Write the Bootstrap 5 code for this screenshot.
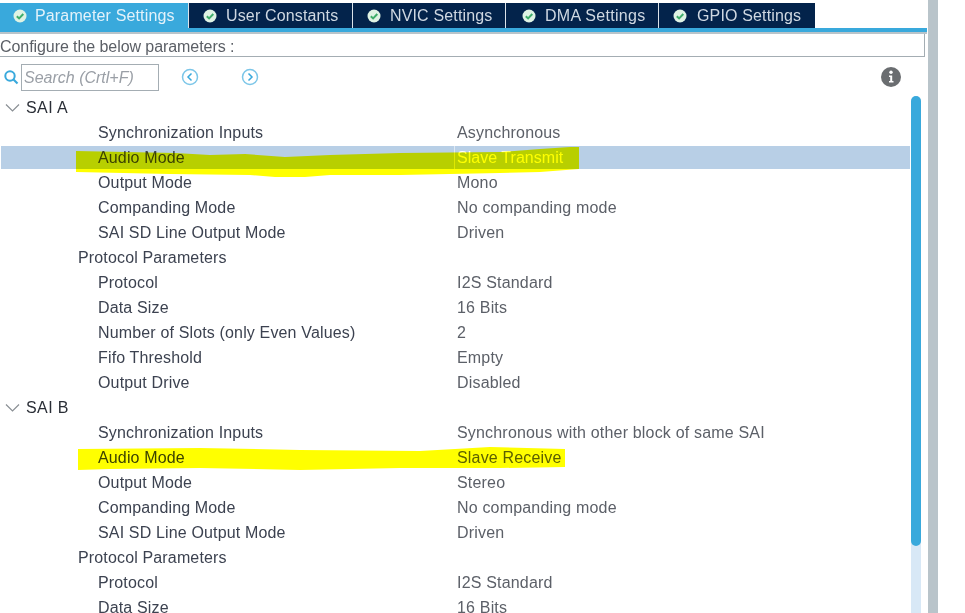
<!DOCTYPE html>
<html lang="en"><head><meta charset="utf-8"><title>Parameter Settings</title>
<link href="https://cdn.jsdelivr.net/npm/bootstrap@5.3.0/dist/css/bootstrap.min.css" rel="stylesheet">
<style>
html,body{height:613px;overflow:hidden;background:#fff}
body{font-family:"Liberation Sans",Arial,sans-serif;font-size:16px;color:#3c4250;position:relative}
.shell{width:965px;height:613px;overflow:hidden}
.leftcol{width:927px;height:613px;flex:none;padding-top:3px}
.sepa{width:10px;height:613px;flex:none;background:#b9c4ca;margin-left:1px}
.tabbar{height:25px}
.tabx{height:25px;background:#03234b;color:#cfd8e2;display:flex;align-items:center;gap:8px;padding-left:14px;border-right:1px solid #dbe3ea;letter-spacing:.15px;font-size:16px;white-space:nowrap}
.tabx.on{background:#39a9dc;color:#e3f2fa;padding-left:13px}
.tabx svg{flex:none}
.w1{width:189px}.w2{width:164px;gap:9px}.w3{width:153px;gap:9px}.w4{width:153px;padding-left:16px;gap:9px;letter-spacing:.3px}.w5{width:156px;border-right:0;gap:10px}
.blueln{height:4px;background:#39a9dc;}
.grayln{height:2px;background:#b9c4ca;width:927px}
.confbox{height:23px;width:925px;border:1px solid #a4adb3;border-top:0;border-left:0;line-height:20px;padding-top:3px;color:#5b5f66;letter-spacing:-.07px}
.searchrow{height:38px;padding-left:3px;padding-top:2px;position:relative}
.sbox{width:138px;height:27px;border:1px solid #a4adb3;color:#9a9fa6;font-style:italic;line-height:25px;padding-left:2px;margin-left:2px}
.nav1{margin-left:22px}.nav2{margin-left:42px}
.infoi{margin-left:auto;margin-right:26px}
.listwrap{height:518px;overflow:hidden;position:relative}
.scrl{width:10px;background:#d8e8f6;position:absolute;right:6px;top:1px;bottom:0;border-radius:5px 5px 0 0}
.scrl i{display:block;height:450px;background:#39a9dc;border-radius:5px}
.rowx{height:25px;line-height:25px;display:flex;white-space:nowrap;letter-spacing:.15px;width:910px}
.rowx.sel{background:#b8cfe6;height:23px;line-height:23px;margin:1px 0;border-left:1px solid #fff}
.rowx.sel .ind2{padding-left:97px;width:453px}
.rowx.sel .val{border-left:1px solid #dfe9f3;padding-left:2px;letter-spacing:.03px}
.ind1{padding-left:78px;width:457px;flex:none}
.ind2{padding-left:98px;width:457px;flex:none}
.val{color:#5c6068;letter-spacing:.18px}
.head{padding-left:5px;color:#2a2e36;align-items:center;gap:5px;letter-spacing:.4px}
.hl{position:absolute;left:0;top:0;pointer-events:none;mix-blend-mode:multiply}
</style></head>
<body>
<div class="shell d-flex">
<div class="leftcol">
 <div class="tabbar d-flex">
  <div class="tabx on w1"><svg width="14" height="14" viewBox="0 0 14 14"><circle cx="7" cy="7" r="6.500" fill="#dff3e4"/><path d="M3.800 7.200l2.300 2.200 4.200-4.400" fill="none" stroke="#3fae6a" stroke-width="2"/></svg>Parameter Settings</div>
  <div class="tabx w2"><svg width="14" height="14" viewBox="0 0 14 14"><circle cx="7" cy="7" r="6.500" fill="#dff3e4"/><path d="M3.800 7.200l2.300 2.200 4.200-4.400" fill="none" stroke="#3fae6a" stroke-width="2"/></svg>User Constants</div>
  <div class="tabx w3"><svg width="14" height="14" viewBox="0 0 14 14"><circle cx="7" cy="7" r="6.500" fill="#dff3e4"/><path d="M3.800 7.200l2.300 2.200 4.200-4.400" fill="none" stroke="#3fae6a" stroke-width="2"/></svg>NVIC Settings</div>
  <div class="tabx w4"><svg width="14" height="14" viewBox="0 0 14 14"><circle cx="7" cy="7" r="6.500" fill="#dff3e4"/><path d="M3.800 7.200l2.300 2.200 4.200-4.400" fill="none" stroke="#3fae6a" stroke-width="2"/></svg>DMA Settings</div>
  <div class="tabx w5"><svg width="14" height="14" viewBox="0 0 14 14"><circle cx="7" cy="7" r="6.500" fill="#dff3e4"/><path d="M3.800 7.200l2.300 2.200 4.200-4.400" fill="none" stroke="#3fae6a" stroke-width="2"/></svg>GPIO Settings</div>
 </div>
 <div class="blueln"></div>
 <div class="grayln"></div>
 <div class="confbox">Configure the below parameters :</div>
 <div class="searchrow d-flex align-items-center">
  <svg width="16" height="16" viewBox="0 0 16 16"><circle cx="7" cy="7" r="4.700" fill="none" stroke="#39a9dc" stroke-width="2"/><path d="M10.500 10.500l4 4" stroke="#39a9dc" stroke-width="2.200"/></svg>
  <div class="sbox">Search (Crtl+F)</div>
  <svg class="nav1" width="18" height="18" viewBox="0 0 18 18"><circle cx="9" cy="9" r="7.500" fill="none" stroke="#7cc6e8" stroke-width="1.500"/><path d="M10.500 5.500L7 9l3.500 3.500" fill="none" stroke="#39a9dc" stroke-width="1.500"/></svg>
  <svg class="nav2" width="18" height="18" viewBox="0 0 18 18"><circle cx="9" cy="9" r="7.500" fill="none" stroke="#7cc6e8" stroke-width="1.500"/><path d="M7.500 5.500L11 9l-3.500 3.500" fill="none" stroke="#39a9dc" stroke-width="1.500"/></svg>
  <svg class="infoi" width="20" height="20" viewBox="0 0 20 20"><circle cx="10" cy="10" r="10" fill="#6a6d70"/><circle cx="10" cy="5.200" r="1.700" fill="#fff"/><path d="M8 8.500h3.200V14H12.500v1.500H8V14h1.200V10H8z" fill="#fff"/></svg>
 </div>
 <div class="listwrap">
  <div class="rowx head"><svg width="16" height="10" viewBox="0 0 16 10"><path d="M1 1.500l6.500 6.500L14 1.500" fill="none" stroke="#8a8f94" stroke-width="1.200"/></svg>SAI A</div>
  <div class="rowx"><div class="ind2">Synchronization Inputs</div><div class="val">Asynchronous</div></div>
  <div class="rowx sel"><div class="ind2">Audio Mode</div><div class="val text-white">Slave Transmit</div></div>
  <div class="rowx"><div class="ind2">Output Mode</div><div class="val">Mono</div></div>
  <div class="rowx"><div class="ind2">Companding Mode</div><div class="val">No companding mode</div></div>
  <div class="rowx"><div class="ind2">SAI SD Line Output Mode</div><div class="val">Driven</div></div>
  <div class="rowx"><div class="ind1">Protocol Parameters</div></div>
  <div class="rowx"><div class="ind2">Protocol</div><div class="val">I2S Standard</div></div>
  <div class="rowx"><div class="ind2">Data Size</div><div class="val">16 Bits</div></div>
  <div class="rowx"><div class="ind2">Number of Slots (only Even Values)</div><div class="val">2</div></div>
  <div class="rowx"><div class="ind2">Fifo Threshold</div><div class="val">Empty</div></div>
  <div class="rowx"><div class="ind2">Output Drive</div><div class="val">Disabled</div></div>
  <div class="rowx head"><svg width="16" height="10" viewBox="0 0 16 10"><path d="M1 1.500l6.500 6.500L14 1.500" fill="none" stroke="#8a8f94" stroke-width="1.200"/></svg>SAI B</div>
  <div class="rowx"><div class="ind2">Synchronization Inputs</div><div class="val">Synchronous with other block of same SAI</div></div>
  <div class="rowx"><div class="ind2">Audio Mode</div><div class="val">Slave Receive</div></div>
  <div class="rowx"><div class="ind2">Output Mode</div><div class="val">Stereo</div></div>
  <div class="rowx"><div class="ind2">Companding Mode</div><div class="val">No companding mode</div></div>
  <div class="rowx"><div class="ind2">SAI SD Line Output Mode</div><div class="val">Driven</div></div>
  <div class="rowx"><div class="ind1">Protocol Parameters</div></div>
  <div class="rowx"><div class="ind2">Protocol</div><div class="val">I2S Standard</div></div>
  <div class="rowx"><div class="ind2">Data Size</div><div class="val">16 Bits</div></div>
  <div class="scrl"><i></i></div>
 </div>
</div>
<div class="sepa"></div>
</div>
<svg class="hl" width="965" height="613" viewBox="0 0 965 613"><path fill="#ffff00" d="M76 151 175 153 210 155 245 154 285 157 330 155 400 153 500 152 540 149 570 147 579 147 579 169 540 172 500 173 400 175 330 175 305 177 275 177 250 175 170 174 76 172Z"/><path fill="#ffff00" d="M78 449 200 448 300 450 420 451 490 447 565 449 565 467 500 468 400 468 300 470 200 468 110 469 78 470Z"/></svg>
</body></html>
